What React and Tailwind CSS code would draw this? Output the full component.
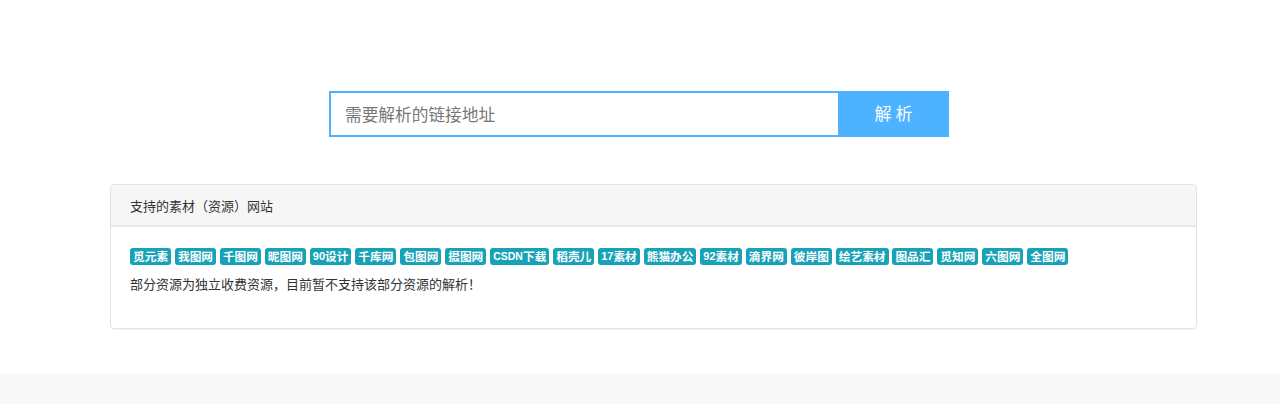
const tags = ["觅元素","我图网","千图网","昵图网","90设计","千库网","包图网","摄图网","CSDN下载","稻壳儿","17素材","熊猫办公","92素材","滴界网","彼岸图","绘艺素材","图品汇","觅知网","六图网","全图网"];
const font = { fontFamily: '"Liberation Sans", "Noto Sans CJK SC", sans-serif' };

function Tag({ text }) {
  const m = text.match(/^([0-9]+|[A-Z]+)(.*)$/);
  const latinSize = m && /^[0-9]/.test(m[1]) ? "text-[11px]" : "text-[10.5px]";
  return (
    <span className="h-[17px] px-[3px] flex items-center rounded-[3px] bg-[#17a2b8] text-white text-[11.7px] font-bold leading-none whitespace-nowrap">
      {m ? <><span className={latinSize}>{m[1]}</span>{m[2]}</> : text}
    </span>
  );
}

export default function App() {
  return (
    <div style={font} className="min-h-[404px] bg-white flex flex-col text-[#333]">
      <div className="pl-[329px] pt-[91px]">
        <div className="flex w-[620px] h-[46px]">
          <div className="flex-1 border-2 border-r-0 border-[#4db2ff] flex items-center pl-[14px] pt-[3px] text-[16.7px] text-[#777]">需要解析的链接地址</div>
          <button className="w-[111px] bg-[#4db2ff] text-white text-[17px] tracking-[4px] pt-[2px] pl-[4px]">解析</button>
        </div>
      </div>
      <div className="mx-[110px] w-[1087px] mt-[47px] h-[145px] border border-[#e3e3e3] rounded-[4px] shadow-[0_1px_1px_rgba(0,0,0,0.05)] overflow-hidden">
        <div className="h-[42px] bg-[#f6f6f6] border-b-2 border-[#e8e8e8] flex items-center pl-[19px] pt-[3px] text-[13px]">支持的素材（资源）网站</div>
        <div className="pl-[19px] pt-[21px]">
          <div className="flex gap-[3.88px]">
            {tags.map((t) => <Tag key={t} text={t} />)}
          </div>
          <p className="mt-[11px] text-[13px] leading-[18px]">部分资源为独立收费资源，目前暂不支持该部分资源的解析！</p>
        </div>
      </div>
      <div className="mt-[45px] h-[30px] bg-[#f8f8f8]" />
    </div>
  );
}
